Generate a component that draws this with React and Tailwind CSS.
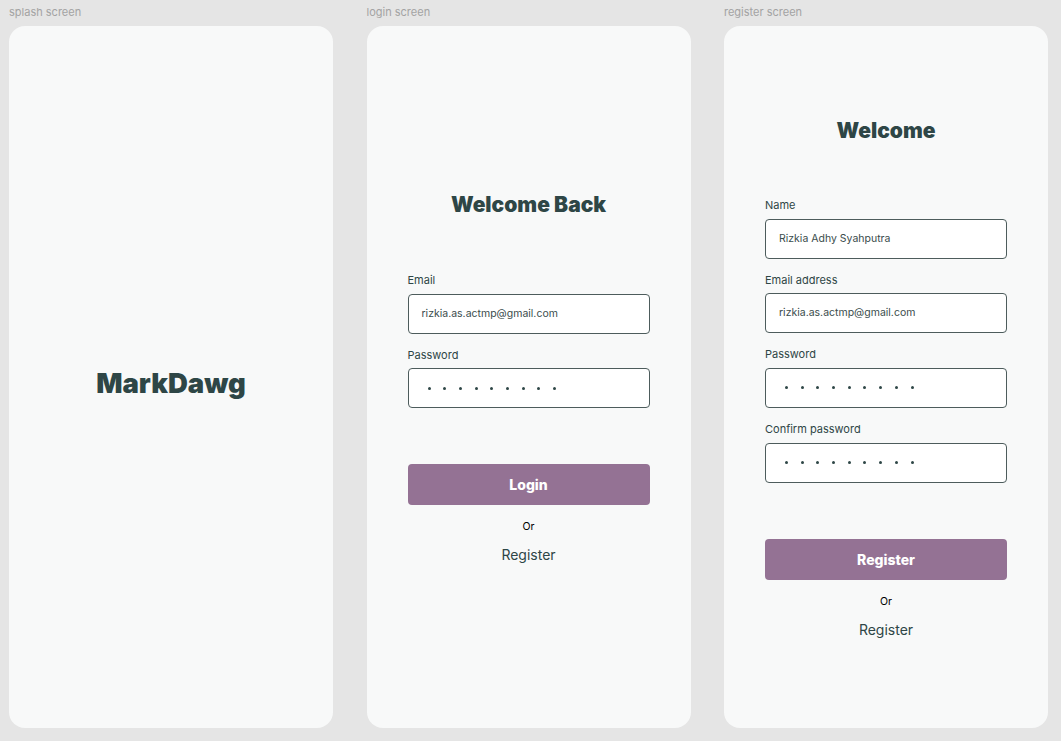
const ink = "text-[#2e4646]";

function Field({ label, value, password }) {
  return (
    <div className="flex flex-col">
      <label className={`text-[11px] leading-[14px] ${ink} mb-[6.5px]`}>{label}</label>
      <div className="h-[40px] w-full rounded-[4px] border border-[#4d5c5c] bg-white flex items-center px-[13px]">
        {password ? (
          <div className="flex items-center gap-[12.7px] pl-[6px]">
            {Array.from({ length: 9 }).map((_, i) => (
              <span key={i} className="w-[3px] h-[3px] rounded-full bg-[#2e4646]" />
            ))}
          </div>
        ) : (
          <span className="text-[10.5px] text-[#3a4c4c]">{value}</span>
        )}
      </div>
    </div>
  );
}

function Screen({ title, children }) {
  return (
    <div className="flex flex-col w-[324px]">
      <div className="h-[26px] text-[11px] leading-[24px] text-[#a3a3a3]">{title}</div>
      <div className="h-[702px] rounded-[16px] bg-[#f8f9f9] flex flex-col">{children}</div>
    </div>
  );
}

function Footer({ button }) {
  return (
    <div className="flex flex-col items-center">
      <button className="h-[41px] w-full rounded-[4px] bg-[#947294] text-white text-[14px] font-extrabold">
        {button}
      </button>
      <div className="mt-[16px] text-[10.5px] leading-[12px] text-black">Or</div>
      <div className={`mt-[13px] text-[14px] leading-[18px] ${ink}`}>Register</div>
    </div>
  );
}

export default function App() {
  return (
    <div
      className="w-[1061px] h-[741px] bg-[#e5e5e5] flex gap-[33.5px] pl-[9px]"
      style={{ fontFamily: "Inter, 'Noto Sans', sans-serif" }}
    >
      <Screen title="splash screen">
        <div className="flex-1 flex items-center justify-center">
          <h1 className={`text-[27.5px] font-black ${ink} mt-[14px]`}>MarkDawg</h1>
        </div>
      </Screen>

      <Screen title="login screen">
        <div className="px-[41px] pt-[167px] flex flex-col">
          <h2 className={`text-[21px] leading-[24px] font-black text-center ${ink}`}>Welcome Back</h2>
          <div className="mt-[56px] flex flex-col gap-[14.2px]">
            <Field label="Email" value="rizkia.as.actmp@gmail.com" />
            <Field label="Password" password />
          </div>
          <div className="mt-[56px]">
            <Footer button="Login" />
          </div>
        </div>
      </Screen>

      <Screen title="register screen">
        <div className="px-[41px] pt-[93px] flex flex-col">
          <h2 className={`text-[21px] leading-[24px] font-black text-center ${ink}`}>Welcome</h2>
          <div className="mt-[55px] flex flex-col gap-[14.2px]">
            <Field label="Name" value="Rizkia Adhy Syahputra" />
            <Field label="Email address" value="rizkia.as.actmp@gmail.com" />
            <Field label="Password" password />
            <Field label="Confirm password" password />
          </div>
          <div className="mt-[56px]">
            <Footer button="Register" />
          </div>
        </div>
      </Screen>
    </div>
  );
}
